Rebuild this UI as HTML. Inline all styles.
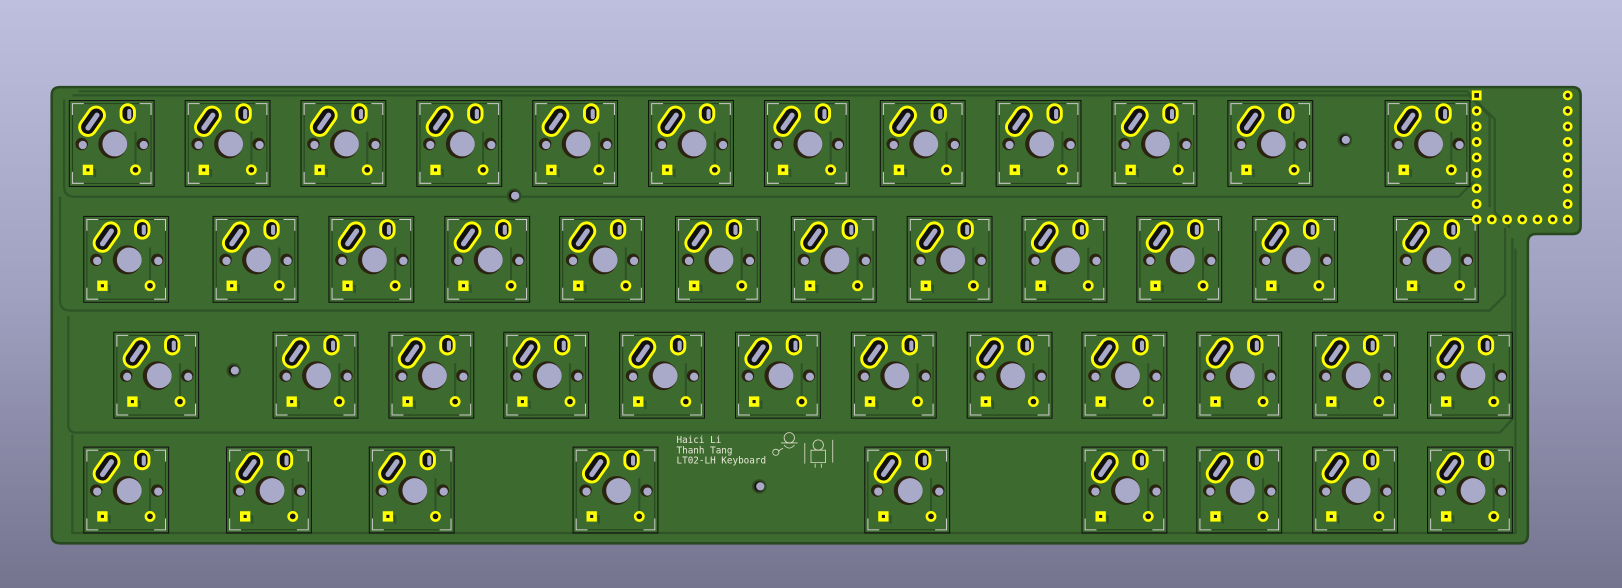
<!DOCTYPE html>
<html><head><meta charset="utf-8"><style>
html,body{margin:0;padding:0;width:1622px;height:588px;overflow:hidden;background:linear-gradient(#bdbddd,#9d9dbd 50%,#73738f);}
svg{display:block}
</style></head><body>
<svg id="s" width="1622" height="588" viewBox="0 0 1568 568" xmlns="http://www.w3.org/2000/svg">
<defs>
<linearGradient id="bg" x1="0" y1="0" x2="0" y2="1"><stop offset="0" stop-color="#bebede"/><stop offset="0.5" stop-color="#a0a0c0"/><stop offset="1" stop-color="#74748f"/></linearGradient>
</defs>
<rect width="1568" height="568" fill="url(#bg)"/>
<path d="M58,84 H1520 Q1528,84 1528,92 V218 Q1528,226 1520,226 H1485 Q1477,226 1477,234 V517 Q1477,525 1469,525 H58 Q50,525 50,517 V92 Q50,84 58,84 Z" fill="#3d6a2f" stroke="#28491f" stroke-width="2.5"/>
<g id="tr" fill="none" stroke="#2d5327" stroke-width="2.2" opacity="0.9">
<path d="M62,96 V180 Q62,190 72,190 H1410 L1425,175"/>
<path d="M58,190 V290 Q58,300 68,300 H1440 L1455,285 V220"/>
<path d="M66,305 V410 Q66,418 74,418 H1450 L1462,405 V230"/>
<path d="M70,420 V515 H1465 V240"/>
<path d="M70,92 H1420 L1440,112 V200"/>
<path d="M76,88 H1418 L1445,115 V205 L1460,220"/>
</g>
<g id="sw"></g>
<g fill="#1a1a1a" stroke="#ffff00" stroke-width="2.5" id="pins"></g>
<g font-family="'DejaVu Sans Mono','Liberation Mono',monospace" font-size="9" fill="#e8e8d8">
<text x="654" y="428">Haici Li</text>
<text x="654" y="438">Thanh Tang</text>
<text x="654" y="448">LT02-LH Keyboard</text>
</g>
<g fill="none" stroke="#dcdcc8" stroke-width="0.8">
<circle cx="763" cy="423" r="5"/><path d="M755,428 h16 M758,430 q5,6 10,0 M752,436 l5,-3"/><circle cx="750" cy="437" r="3"/>
<circle cx="791" cy="430" r="5"/><path d="M784,435 h14 v12 h-14 z M778,428 v20 M805,425 v22 M788,448 v4 M794,448 v4"/>
</g>
</svg>
<script>
var sw=document.getElementById('sw'),ns='http://www.w3.org/2000/svg',h='';
var rows=[[97,[67,179,291,403,515,627,739,851,963,1075,1187,1339]],
[209,[81,206,318,430,541,653,765,877,988,1099,1211,1347]],
[321,[110,264,376,487,599,711,823,935,1046,1157,1269,1380]],
[432,[81,219,357,554,836,1046,1157,1269,1380]]];
rows.forEach(function(r){var y=r[0];r[1].forEach(function(x){
h+='<g transform="translate('+x+','+y+')">';
h+='<rect x="0" y="0" width="82" height="83" fill="none" stroke="#111" stroke-width="1"/>';
h+='<rect x="3" y="3" width="76" height="77" fill="none" stroke="#1e3a18" stroke-width="0.8"/>';
h+='<path d="M3,14 V3 H14 M68,3 H79 V14 M79,69 V80 H68 M14,80 H3 V69" fill="none" stroke="#ccc" stroke-width="1"/>';
h+='<path d="M13,67 H25 V74 M64,72 V30" fill="none" stroke="#2d5327" stroke-width="2"/>';
h+='<circle cx="42" cy="42" r="14" fill="#2a2410"/><circle cx="44" cy="42" r="12" fill="#a9a9c9"/>';
h+='<circle cx="12" cy="42" r="6" fill="#2a2410"/><circle cx="13" cy="43" r="4" fill="#a9a9c9"/>';
h+='<circle cx="71" cy="42" r="6" fill="#2a2410"/><circle cx="72" cy="43" r="4" fill="#a9a9c9"/>';
h+='<g transform="translate(22,20) rotate(-55)"><rect x="-15" y="-8" width="30" height="16" rx="8" fill="#111" stroke="#ffff00" stroke-width="2.8"/><rect x="-10" y="-2" width="20" height="5" rx="2.5" fill="#a9a9c9"/></g>';
h+='<rect x="50" y="4" width="13" height="17" rx="6.5" fill="#111" stroke="#ffff00" stroke-width="2.8"/><rect x="56" y="8" width="4" height="10" rx="2" fill="#a9a9c9"/>';
h+='<rect x="13" y="62" width="10" height="10" fill="#ffff00"/><rect x="16.5" y="65.5" width="3" height="3" fill="#111"/>';
h+='<circle cx="64" cy="67" r="4" fill="#111" stroke="#ffff00" stroke-width="2.5"/>';
h+='</g>';});});
[[1300,135],[497,189],[226,358],[734,470]].forEach(function(p){
h+='<circle cx="'+p[0]+'" cy="'+p[1]+'" r="7" fill="#2d4a25"/><circle cx="'+p[0]+'" cy="'+p[1]+'" r="5" fill="#1a1408"/><circle cx="'+(p[0]+1)+'" cy="'+p[1]+'" r="4" fill="#a9a9c9"/>';});
sw.innerHTML=h;
var p='';
for(var i=0;i<9;i++){var yy=92+i*15;
p+=(i==0?'<rect x="1424" y="'+(yy-3.5)+'" width="7" height="7"/>':'<circle cx="1427.5" cy="'+yy+'" r="3.5"/>');
p+='<circle cx="1515.5" cy="'+yy+'" r="3.5"/>';}
for(var j=1;j<6;j++)p+='<circle cx="'+(1427.5+j*14.7)+'" cy="212" r="3.5"/>';
document.getElementById('pins').innerHTML=p;
</script>
</body></html>
